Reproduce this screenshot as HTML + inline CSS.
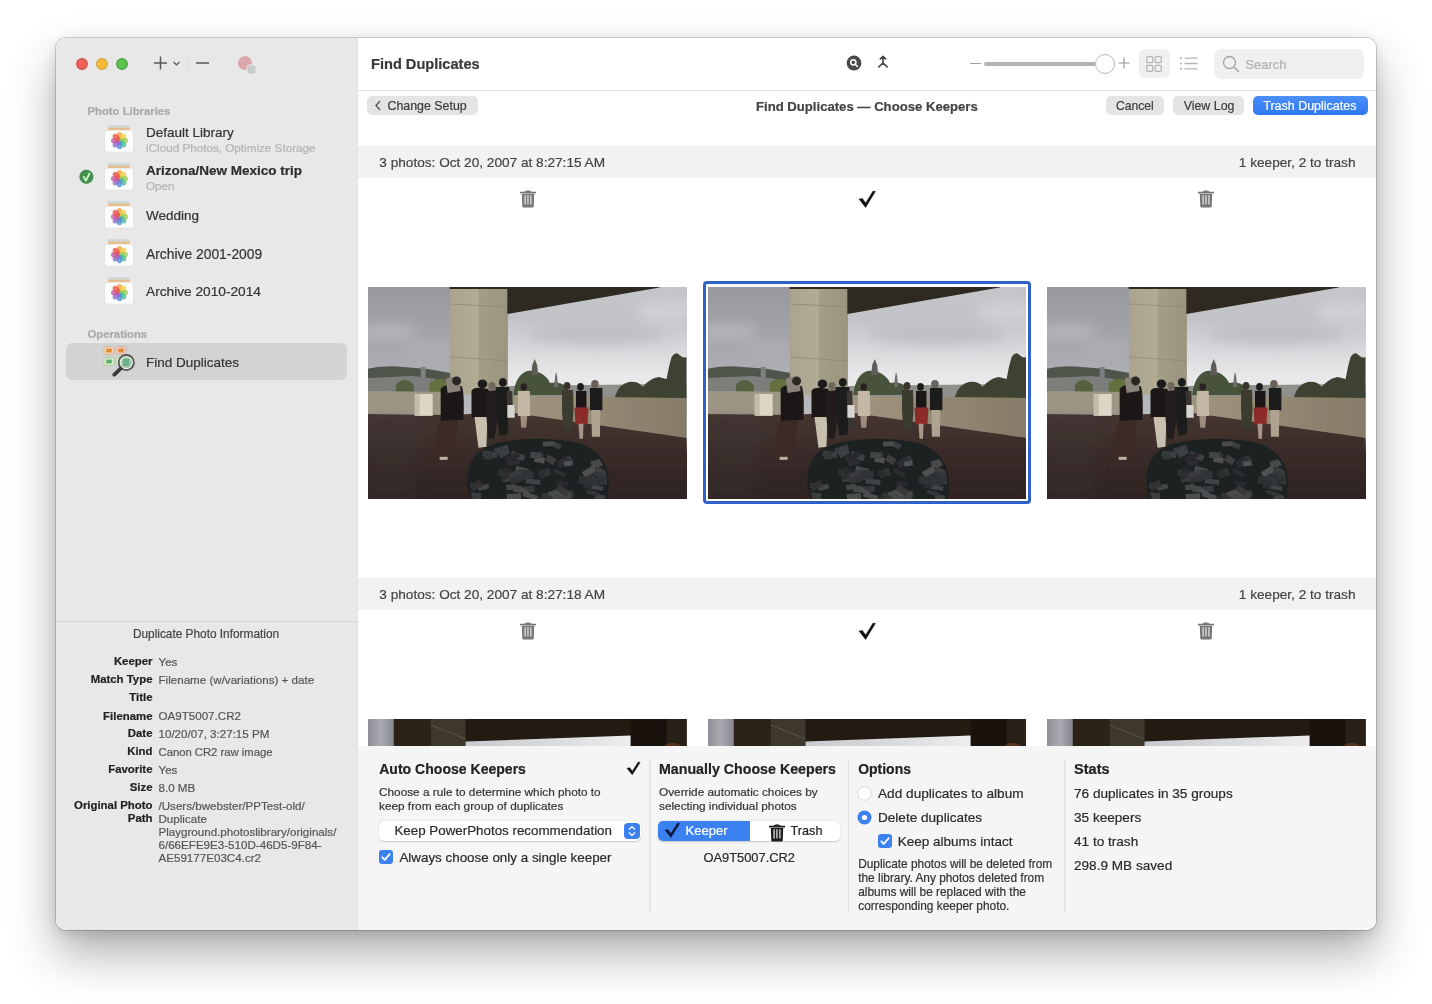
<!DOCTYPE html>
<html><head><meta charset="utf-8"><style>
html,body{margin:0;padding:0;width:1432px;height:1004px;overflow:hidden;background:#fff;font-family:"Liberation Sans",sans-serif;}
.t{position:absolute;white-space:nowrap;-webkit-text-stroke:0.2px currentColor;}
.r{position:absolute;}
#win{position:absolute;left:56px;top:38px;width:1320px;height:892px;border-radius:10px;overflow:hidden;background:#fff;}
#shadow{position:absolute;left:56px;top:38px;width:1320px;height:892px;border-radius:10px;box-shadow:0 0 0 1px rgba(0,0,0,0.16), 0 24px 48px rgba(0,0,0,0.32), 0 4px 14px rgba(0,0,0,0.12);}
#pg{position:absolute;left:-56px;top:-38px;width:1432px;height:1004px;will-change:transform;}
</style></head><body>
<div id="shadow"></div>
<div id="win"><div id="pg">
<div class="r" style="left:56px;top:38px;width:302px;height:892px;background:#e8e8e8;"></div><div class="r" style="left:358px;top:38px;width:1018px;height:892px;background:#ffffff;"></div><div class="r" style="left:356.5px;top:38px;width:1.5px;height:892px;background:#e3e3e3;"></div><div class="r" style="left:358px;top:90px;width:1018px;height:1px;background:#e2e2e2;"></div><svg class="r" style="left:75px;top:57px;" width="14" height="14" viewBox="0 0 14 14" preserveAspectRatio="none"><circle cx="7" cy="7" r="5.4" fill="#ee6257" stroke="#c4544c" stroke-width="1.1"/></svg><svg class="r" style="left:95px;top:57px;" width="14" height="14" viewBox="0 0 14 14" preserveAspectRatio="none"><circle cx="7" cy="7" r="5.4" fill="#f6bd3c" stroke="#d4a23e" stroke-width="1.1"/></svg><svg class="r" style="left:115px;top:57px;" width="14" height="14" viewBox="0 0 14 14" preserveAspectRatio="none"><circle cx="7" cy="7" r="5.4" fill="#5dc450" stroke="#4b9a45" stroke-width="1.1"/></svg><svg class="r" style="left:150px;top:53px;" width="34" height="20" viewBox="0 0 34 20" preserveAspectRatio="none"><path d="M10.5 3.5v13M4 10h13" stroke="#555" stroke-width="1.5" fill="none"/><path d="M23.5 9l3 3 3-3" stroke="#555" stroke-width="1.2" fill="none"/></svg><div class="r" style="left:187px;top:54px;width:1px;height:18px;background:#dcdcdc;"></div><svg class="r" style="left:194px;top:55px;" width="18" height="16" viewBox="0 0 18 16" preserveAspectRatio="none"><path d="M2 8h13" stroke="#555" stroke-width="1.5"/></svg><svg class="r" style="left:236px;top:54px;" width="22" height="22" viewBox="0 0 22 22" preserveAspectRatio="none"><circle cx="9" cy="9" r="7" fill="#d9a0a4" opacity="0.9"/><rect x="11" y="11" width="9" height="9" rx="2.5" fill="#c9cbce" stroke="#e8e8e8" stroke-width="1"/></svg><div class="t" style="left:87.50px;top:105.30px;font-size:11.3px;line-height:13.56px;color:#a9a9a9;font-weight:bold;">Photo Libraries</div><svg class="r" style="left:104px;top:125px;" width="30" height="28" viewBox="0 0 30 28" preserveAspectRatio="none">
    <rect x="3.5" y="0.3" width="22" height="2.2" rx="0.8" fill="#c9d6dc"/>
    <rect x="4" y="2.6" width="22" height="2.4" rx="0.8" fill="#e8bb86"/>
    <rect x="0.5" y="5.2" width="29" height="22" rx="2.5" fill="#fcfcfc" stroke="#d9d9d9" stroke-width="0.6"/>
    <g transform="translate(15.5,15.7)"><ellipse cx="0" cy="-4.4" rx="2.9" ry="4.2" fill="#f0a43a" opacity="0.82" transform="rotate(0)"/><ellipse cx="0" cy="-4.4" rx="2.9" ry="4.2" fill="#f3cf4a" opacity="0.82" transform="rotate(45)"/><ellipse cx="0" cy="-4.4" rx="2.9" ry="4.2" fill="#9ccf52" opacity="0.82" transform="rotate(90)"/><ellipse cx="0" cy="-4.4" rx="2.9" ry="4.2" fill="#4fbf9a" opacity="0.82" transform="rotate(135)"/><ellipse cx="0" cy="-4.4" rx="2.9" ry="4.2" fill="#4d93dc" opacity="0.82" transform="rotate(180)"/><ellipse cx="0" cy="-4.4" rx="2.9" ry="4.2" fill="#8a6fd0" opacity="0.82" transform="rotate(225)"/><ellipse cx="0" cy="-4.4" rx="2.9" ry="4.2" fill="#c65aa8" opacity="0.82" transform="rotate(270)"/><ellipse cx="0" cy="-4.4" rx="2.9" ry="4.2" fill="#e9574e" opacity="0.82" transform="rotate(315)"/></g></svg><div class="t" style="left:146.00px;top:125.22px;font-size:13.5px;line-height:16.20px;color:#333;">Default Library</div><div class="t" style="left:146.00px;top:141.43px;font-size:11.7px;line-height:14.04px;color:#b2b2b2;">iCloud Photos, Optimize Storage</div><svg class="r" style="left:78.5px;top:168.5px;" width="15" height="15" viewBox="0 0 15 15" preserveAspectRatio="none"><circle cx="7.4" cy="7.7" r="6.7" fill="#43924a" stroke="#356f3a" stroke-width="0.6"/><path d="M4.8 7.9L6.8 11.6L10.5 4.6" stroke="#cdf5c6" stroke-width="1.9" fill="none" stroke-linecap="round" stroke-linejoin="round"/></svg><svg class="r" style="left:104px;top:163px;" width="30" height="28" viewBox="0 0 30 28" preserveAspectRatio="none">
    <rect x="3.5" y="0.3" width="22" height="2.2" rx="0.8" fill="#c9d6dc"/>
    <rect x="4" y="2.6" width="22" height="2.4" rx="0.8" fill="#e8bb86"/>
    <rect x="0.5" y="5.2" width="29" height="22" rx="2.5" fill="#fcfcfc" stroke="#d9d9d9" stroke-width="0.6"/>
    <g transform="translate(15.5,15.7)"><ellipse cx="0" cy="-4.4" rx="2.9" ry="4.2" fill="#f0a43a" opacity="0.82" transform="rotate(0)"/><ellipse cx="0" cy="-4.4" rx="2.9" ry="4.2" fill="#f3cf4a" opacity="0.82" transform="rotate(45)"/><ellipse cx="0" cy="-4.4" rx="2.9" ry="4.2" fill="#9ccf52" opacity="0.82" transform="rotate(90)"/><ellipse cx="0" cy="-4.4" rx="2.9" ry="4.2" fill="#4fbf9a" opacity="0.82" transform="rotate(135)"/><ellipse cx="0" cy="-4.4" rx="2.9" ry="4.2" fill="#4d93dc" opacity="0.82" transform="rotate(180)"/><ellipse cx="0" cy="-4.4" rx="2.9" ry="4.2" fill="#8a6fd0" opacity="0.82" transform="rotate(225)"/><ellipse cx="0" cy="-4.4" rx="2.9" ry="4.2" fill="#c65aa8" opacity="0.82" transform="rotate(270)"/><ellipse cx="0" cy="-4.4" rx="2.9" ry="4.2" fill="#e9574e" opacity="0.82" transform="rotate(315)"/></g></svg><div class="t" style="left:146.00px;top:163.22px;font-size:13.5px;line-height:16.20px;color:#2e2e2e;font-weight:bold;">Arizona/New Mexico trip</div><div class="t" style="left:146.00px;top:179.43px;font-size:11.7px;line-height:14.04px;color:#b2b2b2;">Open</div><svg class="r" style="left:104px;top:201px;" width="30" height="28" viewBox="0 0 30 28" preserveAspectRatio="none">
    <rect x="3.5" y="0.3" width="22" height="2.2" rx="0.8" fill="#c9d6dc"/>
    <rect x="4" y="2.6" width="22" height="2.4" rx="0.8" fill="#e8bb86"/>
    <rect x="0.5" y="5.2" width="29" height="22" rx="2.5" fill="#fcfcfc" stroke="#d9d9d9" stroke-width="0.6"/>
    <g transform="translate(15.5,15.7)"><ellipse cx="0" cy="-4.4" rx="2.9" ry="4.2" fill="#f0a43a" opacity="0.82" transform="rotate(0)"/><ellipse cx="0" cy="-4.4" rx="2.9" ry="4.2" fill="#f3cf4a" opacity="0.82" transform="rotate(45)"/><ellipse cx="0" cy="-4.4" rx="2.9" ry="4.2" fill="#9ccf52" opacity="0.82" transform="rotate(90)"/><ellipse cx="0" cy="-4.4" rx="2.9" ry="4.2" fill="#4fbf9a" opacity="0.82" transform="rotate(135)"/><ellipse cx="0" cy="-4.4" rx="2.9" ry="4.2" fill="#4d93dc" opacity="0.82" transform="rotate(180)"/><ellipse cx="0" cy="-4.4" rx="2.9" ry="4.2" fill="#8a6fd0" opacity="0.82" transform="rotate(225)"/><ellipse cx="0" cy="-4.4" rx="2.9" ry="4.2" fill="#c65aa8" opacity="0.82" transform="rotate(270)"/><ellipse cx="0" cy="-4.4" rx="2.9" ry="4.2" fill="#e9574e" opacity="0.82" transform="rotate(315)"/></g></svg><div class="t" style="left:146.00px;top:208.22px;font-size:13.5px;line-height:16.20px;color:#333;">Wedding</div><svg class="r" style="left:104px;top:239px;" width="30" height="28" viewBox="0 0 30 28" preserveAspectRatio="none">
    <rect x="3.5" y="0.3" width="22" height="2.2" rx="0.8" fill="#c9d6dc"/>
    <rect x="4" y="2.6" width="22" height="2.4" rx="0.8" fill="#e8bb86"/>
    <rect x="0.5" y="5.2" width="29" height="22" rx="2.5" fill="#fcfcfc" stroke="#d9d9d9" stroke-width="0.6"/>
    <g transform="translate(15.5,15.7)"><ellipse cx="0" cy="-4.4" rx="2.9" ry="4.2" fill="#f0a43a" opacity="0.82" transform="rotate(0)"/><ellipse cx="0" cy="-4.4" rx="2.9" ry="4.2" fill="#f3cf4a" opacity="0.82" transform="rotate(45)"/><ellipse cx="0" cy="-4.4" rx="2.9" ry="4.2" fill="#9ccf52" opacity="0.82" transform="rotate(90)"/><ellipse cx="0" cy="-4.4" rx="2.9" ry="4.2" fill="#4fbf9a" opacity="0.82" transform="rotate(135)"/><ellipse cx="0" cy="-4.4" rx="2.9" ry="4.2" fill="#4d93dc" opacity="0.82" transform="rotate(180)"/><ellipse cx="0" cy="-4.4" rx="2.9" ry="4.2" fill="#8a6fd0" opacity="0.82" transform="rotate(225)"/><ellipse cx="0" cy="-4.4" rx="2.9" ry="4.2" fill="#c65aa8" opacity="0.82" transform="rotate(270)"/><ellipse cx="0" cy="-4.4" rx="2.9" ry="4.2" fill="#e9574e" opacity="0.82" transform="rotate(315)"/></g></svg><div class="t" style="left:146.00px;top:245.89px;font-size:13.85px;line-height:16.62px;color:#333;">Archive 2001-2009</div><svg class="r" style="left:104px;top:277px;" width="30" height="28" viewBox="0 0 30 28" preserveAspectRatio="none">
    <rect x="3.5" y="0.3" width="22" height="2.2" rx="0.8" fill="#c9d6dc"/>
    <rect x="4" y="2.6" width="22" height="2.4" rx="0.8" fill="#e8bb86"/>
    <rect x="0.5" y="5.2" width="29" height="22" rx="2.5" fill="#fcfcfc" stroke="#d9d9d9" stroke-width="0.6"/>
    <g transform="translate(15.5,15.7)"><ellipse cx="0" cy="-4.4" rx="2.9" ry="4.2" fill="#f0a43a" opacity="0.82" transform="rotate(0)"/><ellipse cx="0" cy="-4.4" rx="2.9" ry="4.2" fill="#f3cf4a" opacity="0.82" transform="rotate(45)"/><ellipse cx="0" cy="-4.4" rx="2.9" ry="4.2" fill="#9ccf52" opacity="0.82" transform="rotate(90)"/><ellipse cx="0" cy="-4.4" rx="2.9" ry="4.2" fill="#4fbf9a" opacity="0.82" transform="rotate(135)"/><ellipse cx="0" cy="-4.4" rx="2.9" ry="4.2" fill="#4d93dc" opacity="0.82" transform="rotate(180)"/><ellipse cx="0" cy="-4.4" rx="2.9" ry="4.2" fill="#8a6fd0" opacity="0.82" transform="rotate(225)"/><ellipse cx="0" cy="-4.4" rx="2.9" ry="4.2" fill="#c65aa8" opacity="0.82" transform="rotate(270)"/><ellipse cx="0" cy="-4.4" rx="2.9" ry="4.2" fill="#e9574e" opacity="0.82" transform="rotate(315)"/></g></svg><div class="t" style="left:146.00px;top:284.03px;font-size:13.7px;line-height:16.44px;color:#333;">Archive 2010-2014</div><div class="t" style="left:87.50px;top:328.30px;font-size:11.3px;line-height:13.56px;color:#a9a9a9;font-weight:bold;">Operations</div><div class="r" style="left:66px;top:343px;width:281px;height:37px;background:#d3d3d3;border-radius:6px;"></div><svg class="r" style="left:102px;top:345px;" width="36" height="34" viewBox="0 0 36 34" preserveAspectRatio="none">
  <rect x="2" y="1.5" width="10" height="8" rx="1.5" fill="#f7d2b0" stroke="#b9aca0" stroke-width="0.7"/>
  <rect x="4.3" y="3.6" width="5.4" height="3.8" fill="#df8f2e"/>
  <rect x="14" y="1.5" width="10" height="8" rx="1.5" fill="#f7c8b8" stroke="#b9aca0" stroke-width="0.7"/>
  <rect x="16.3" y="3.6" width="5.4" height="3.8" fill="#de8a30"/>
  <rect x="2" y="12.5" width="10" height="8" rx="1.5" fill="#d4f2c4" stroke="#a9b8a4" stroke-width="0.7"/>
  <rect x="4.3" y="14.6" width="5.4" height="3.8" fill="#5aa86a"/>
  <rect x="14" y="12.5" width="10" height="8" rx="1.5" fill="#d4f2c4" stroke="#a9b8a4" stroke-width="0.7"/>
  <circle cx="24.3" cy="17.6" r="6.6" fill="#8cc79a" fill-opacity="0.75"/>
  <rect x="21" y="14" width="6" height="7" fill="#4f9a7a" opacity="0.6"/>
  <circle cx="24.3" cy="17.6" r="6.2" fill="none" stroke="#f4f4f4" stroke-width="1.2"/>
  <circle cx="24.3" cy="17.6" r="7.6" fill="none" stroke="#555" stroke-width="1.8"/>
  <path d="M18.6 23.6L12.3 29.6" stroke="#3a3a3a" stroke-width="3.8" stroke-linecap="round"/>
</svg><div class="t" style="left:146.00px;top:354.72px;font-size:13.5px;line-height:16.20px;color:#333;">Find Duplicates</div><div class="r" style="left:56px;top:621px;width:302px;height:1px;background:#d6d6d6;"></div><div class="t" style="left:-94.00px;width:600px;text-align:center;top:627.08px;font-size:11.85px;line-height:14.22px;color:#444;">Duplicate Photo Information</div><div class="t" style="left:-247.50px;width:400px;text-align:right;top:655.41px;font-size:11.4px;line-height:13.68px;color:#1f1f1f;font-weight:bold;">Keeper</div><div class="t" style="left:158.50px;top:655.22px;font-size:11.6px;line-height:13.92px;color:#555;">Yes</div><div class="t" style="left:-247.50px;width:400px;text-align:right;top:673.01px;font-size:11.4px;line-height:13.68px;color:#1f1f1f;font-weight:bold;">Match Type</div><div class="t" style="left:158.50px;top:672.82px;font-size:11.6px;line-height:13.92px;color:#555;">Filename (w/variations) + date</div><div class="t" style="left:-247.50px;width:400px;text-align:right;top:691.21px;font-size:11.4px;line-height:13.68px;color:#1f1f1f;font-weight:bold;">Title</div><div class="t" style="left:-247.50px;width:400px;text-align:right;top:709.51px;font-size:11.4px;line-height:13.68px;color:#1f1f1f;font-weight:bold;">Filename</div><div class="t" style="left:158.50px;top:709.32px;font-size:11.6px;line-height:13.92px;color:#555;">OA9T5007.CR2</div><div class="t" style="left:-247.50px;width:400px;text-align:right;top:727.11px;font-size:11.4px;line-height:13.68px;color:#1f1f1f;font-weight:bold;">Date</div><div class="t" style="left:158.50px;top:726.92px;font-size:11.6px;line-height:13.92px;color:#555;">10/20/07, 3:27:15 PM</div><div class="t" style="left:-247.50px;width:400px;text-align:right;top:745.41px;font-size:11.4px;line-height:13.68px;color:#1f1f1f;font-weight:bold;">Kind</div><div class="t" style="left:158.50px;top:745.53px;font-size:11.27px;line-height:13.52px;color:#555;">Canon CR2 raw image</div><div class="t" style="left:-247.50px;width:400px;text-align:right;top:763.01px;font-size:11.4px;line-height:13.68px;color:#1f1f1f;font-weight:bold;">Favorite</div><div class="t" style="left:158.50px;top:762.82px;font-size:11.6px;line-height:13.92px;color:#555;">Yes</div><div class="t" style="left:-247.50px;width:400px;text-align:right;top:780.81px;font-size:11.4px;line-height:13.68px;color:#1f1f1f;font-weight:bold;">Size</div><div class="t" style="left:158.50px;top:780.62px;font-size:11.6px;line-height:13.92px;color:#555;">8.0 MB</div><div class="t" style="left:-247.50px;width:400px;text-align:right;top:799.11px;font-size:11.4px;line-height:13.68px;color:#1f1f1f;font-weight:bold;">Original Photo</div><div class="t" style="left:-247.50px;width:400px;text-align:right;top:811.61px;font-size:11.4px;line-height:13.68px;color:#1f1f1f;font-weight:bold;">Path</div><div class="t" style="left:158.50px;top:798.92px;font-size:11.6px;line-height:13.92px;color:#555;">/Users/bwebster/PPTest-old/</div><div class="t" style="left:158.50px;top:811.82px;font-size:11.6px;line-height:13.92px;color:#555;">Duplicate</div><div class="t" style="left:158.50px;top:824.72px;font-size:11.6px;line-height:13.92px;color:#555;">Playground.photoslibrary/originals/</div><div class="t" style="left:158.50px;top:837.62px;font-size:11.6px;line-height:13.92px;color:#555;">6/66EFE9E3-510D-46D5-9F84-</div><div class="t" style="left:158.50px;top:850.52px;font-size:11.6px;line-height:13.92px;color:#555;">AE59177E03C4.cr2</div><div class="t" style="left:371.00px;top:55.98px;font-size:14.6px;line-height:17.52px;color:#3a3a3a;font-weight:bold;">Find Duplicates</div><svg class="r" style="left:846px;top:55px;" width="16" height="16" viewBox="0 0 16 16" preserveAspectRatio="none"><circle cx="8" cy="8" r="7.4" fill="#4a4a4a"/><circle cx="7.3" cy="7.3" r="2.6" fill="none" stroke="#fff" stroke-width="1.5"/><path d="M9.2 9.2l2.3 2.3" stroke="#fff" stroke-width="1.6" stroke-linecap="round"/></svg><svg class="r" style="left:876px;top:54px;" width="14" height="15" viewBox="0 0 14 15" preserveAspectRatio="none"><path d="M7 2.5v6.5M3.8 5.5L7 2.3l3.2 3.2M2.3 13.3L7 9l4.7 4.3" stroke="#444" stroke-width="1.6" fill="none" stroke-linejoin="round"/></svg><div class="r" style="left:970px;top:63px;width:11px;height:1.3px;background:#a3a3a3;"></div><div class="r" style="left:984px;top:62px;width:112px;height:4px;background:#b3b3b3;border-radius:2px;"></div><svg class="r" style="left:1094px;top:53px;" width="22" height="22" viewBox="0 0 22 22" preserveAspectRatio="none"><circle cx="11" cy="11" r="9.5" fill="#fff" stroke="#b8b8b8" stroke-width="1"/></svg><svg class="r" style="left:1117px;top:56px;" width="14" height="14" viewBox="0 0 14 14" preserveAspectRatio="none"><path d="M7 1.5v11M1.5 7h11" stroke="#959595" stroke-width="1.1"/></svg><div class="r" style="left:1139px;top:49px;width:31px;height:29px;background:#f0f0f0;border-radius:6px;"></div><svg class="r" style="left:1146px;top:56px;" width="16" height="16" viewBox="0 0 16 16" preserveAspectRatio="none"><rect x="0.7" y="0.7" width="6" height="6" rx="1" fill="none" stroke="#b5b5b5" stroke-width="1.3"/><rect x="9.3" y="0.7" width="6" height="6" rx="1" fill="none" stroke="#b5b5b5" stroke-width="1.3"/><rect x="0.7" y="9.3" width="6" height="6" rx="1" fill="none" stroke="#b5b5b5" stroke-width="1.3"/><rect x="9.3" y="9.3" width="6" height="6" rx="1" fill="none" stroke="#b5b5b5" stroke-width="1.3"/></svg><svg class="r" style="left:1179px;top:56px;" width="20" height="15" viewBox="0 0 20 15" preserveAspectRatio="none"><circle cx="2" cy="2.2" r="1.1" fill="#b5b5b5"/><circle cx="2" cy="7.5" r="1.1" fill="#b5b5b5"/><circle cx="2" cy="12.8" r="1.1" fill="#b5b5b5"/><path d="M5.5 2.2h13M5.5 7.5h13M5.5 12.8h13" stroke="#b5b5b5" stroke-width="1.3"/></svg><div class="r" style="left:1214px;top:49px;width:150px;height:30px;background:#f0f0f0;border-radius:7px;"></div><svg class="r" style="left:1222px;top:55px;" width="18" height="18" viewBox="0 0 18 18" preserveAspectRatio="none"><circle cx="7.5" cy="7.5" r="6" fill="none" stroke="#a8a8a8" stroke-width="1.4"/><path d="M12 12l4.5 4.5" stroke="#a8a8a8" stroke-width="1.6" stroke-linecap="round"/></svg><div class="t" style="left:1245.50px;top:57.29px;font-size:12.9px;line-height:15.48px;color:#b0b0b0;">Search</div><div class="r" style="left:367px;top:96px;width:111px;height:19px;background:#e4e4e4;border-radius:5px;"></div><svg class="r" style="left:373px;top:99px;" width="10" height="13" viewBox="0 0 10 13" preserveAspectRatio="none"><path d="M7 2L3 6.5 7 11" stroke="#555" stroke-width="1.4" fill="none"/></svg><div class="t" style="left:387.50px;top:99.06px;font-size:12.4px;line-height:14.88px;color:#3c3c3c;">Change Setup</div><div class="t" style="left:756.00px;top:99.46px;font-size:13.14px;line-height:15.77px;color:#444;font-weight:bold;">Find Duplicates — Choose Keepers</div><div class="r" style="left:1106px;top:96px;width:58px;height:19px;background:#e4e4e4;border-radius:5px;"></div><div class="t" style="left:1116.00px;top:99.31px;font-size:12.14px;line-height:14.57px;color:#3c3c3c;">Cancel</div><div class="r" style="left:1173px;top:96px;width:71px;height:19px;background:#e4e4e4;border-radius:5px;"></div><div class="t" style="left:1183.70px;top:99.06px;font-size:12.4px;line-height:14.88px;color:#3c3c3c;">View Log</div><div class="r" style="left:1253px;top:96px;width:115px;height:19px;background:linear-gradient(#4b8ff7,#2e78f0);border-radius:5px;"></div><div class="t" style="left:1263.30px;top:98.99px;font-size:12.48px;line-height:14.98px;color:#fff;">Trash Duplicates</div><div class="r" style="left:358px;top:145.8px;width:1018px;height:32.5px;background:#f2f2f2;"></div><div class="t" style="left:379.30px;top:155.49px;font-size:13.64px;line-height:16.37px;color:#444;">3 photos: Oct 20, 2007 at 8:27:15 AM</div><div class="t" style="left:955.50px;width:400px;text-align:right;top:155.49px;font-size:13.64px;line-height:16.37px;color:#444;">1 keeper, 2 to trash</div><svg class="r" style="left:520px;top:189px;" width="16" height="19" viewBox="0 0 16 19" preserveAspectRatio="none"><path d="M4.6 3.4Q8 0.6 11.4 3.4" stroke="#767676" stroke-width="1.3" fill="none"/><path d="M0.4 3.6h15.2" stroke="#767676" stroke-width="1.7" stroke-linecap="round"/><path d="M1.8 5h12.4l-0.5 12.3q-0.1 1.2-1.2 1.2h-9q-1.1 0-1.2-1.2z" fill="#767676"/><path d="M5.1 6.2v9.2M7.95 6.2v9.2M10.9 6.2v9.2" stroke="#e2e2e2" stroke-width="1.3"/></svg><svg class="r" style="left:856.9px;top:188.5px;" width="20.4" height="20.5" viewBox="0 0 20.4 20.5" preserveAspectRatio="none"><polygon points="2.00,10.08 5.44,9.59 8.72,14.04 16.10,2.00 18.40,2.58 8.56,18.50" fill="#111" stroke="#111" stroke-width="0.5" stroke-linejoin="round"/></svg><svg class="r" style="left:1198px;top:189px;" width="16" height="19" viewBox="0 0 16 19" preserveAspectRatio="none"><path d="M4.6 3.4Q8 0.6 11.4 3.4" stroke="#767676" stroke-width="1.3" fill="none"/><path d="M0.4 3.6h15.2" stroke="#767676" stroke-width="1.7" stroke-linecap="round"/><path d="M1.8 5h12.4l-0.5 12.3q-0.1 1.2-1.2 1.2h-9q-1.1 0-1.2-1.2z" fill="#767676"/><path d="M5.1 6.2v9.2M7.95 6.2v9.2M10.9 6.2v9.2" stroke="#e2e2e2" stroke-width="1.3"/></svg><div class="r" style="left:358px;top:577.8px;width:1018px;height:32.5px;background:#f2f2f2;"></div><div class="t" style="left:379.30px;top:587.49px;font-size:13.64px;line-height:16.37px;color:#444;">3 photos: Oct 20, 2007 at 8:27:18 AM</div><div class="t" style="left:955.50px;width:400px;text-align:right;top:587.49px;font-size:13.64px;line-height:16.37px;color:#444;">1 keeper, 2 to trash</div><svg class="r" style="left:520px;top:621px;" width="16" height="19" viewBox="0 0 16 19" preserveAspectRatio="none"><path d="M4.6 3.4Q8 0.6 11.4 3.4" stroke="#767676" stroke-width="1.3" fill="none"/><path d="M0.4 3.6h15.2" stroke="#767676" stroke-width="1.7" stroke-linecap="round"/><path d="M1.8 5h12.4l-0.5 12.3q-0.1 1.2-1.2 1.2h-9q-1.1 0-1.2-1.2z" fill="#767676"/><path d="M5.1 6.2v9.2M7.95 6.2v9.2M10.9 6.2v9.2" stroke="#e2e2e2" stroke-width="1.3"/></svg><svg class="r" style="left:856.9px;top:620.5px;" width="20.4" height="20.5" viewBox="0 0 20.4 20.5" preserveAspectRatio="none"><polygon points="2.00,10.08 5.44,9.59 8.72,14.04 16.10,2.00 18.40,2.58 8.56,18.50" fill="#111" stroke="#111" stroke-width="0.5" stroke-linejoin="round"/></svg><svg class="r" style="left:1198px;top:621px;" width="16" height="19" viewBox="0 0 16 19" preserveAspectRatio="none"><path d="M4.6 3.4Q8 0.6 11.4 3.4" stroke="#767676" stroke-width="1.3" fill="none"/><path d="M0.4 3.6h15.2" stroke="#767676" stroke-width="1.7" stroke-linecap="round"/><path d="M1.8 5h12.4l-0.5 12.3q-0.1 1.2-1.2 1.2h-9q-1.1 0-1.2-1.2z" fill="#767676"/><path d="M5.1 6.2v9.2M7.95 6.2v9.2M10.9 6.2v9.2" stroke="#e2e2e2" stroke-width="1.3"/></svg><svg class="r" style="left:368.3px;top:286.8px;overflow:hidden;" width="318.5" height="211.8" viewBox="0 0 320 212" preserveAspectRatio="none"><defs>
<linearGradient id="skyL" x1="0" y1="0" x2="0" y2="1"><stop offset="0" stop-color="#97989e"/><stop offset="0.3" stop-color="#a7a8ad"/><stop offset="0.55" stop-color="#b6b7bb"/><stop offset="0.8" stop-color="#c3c3c6"/><stop offset="1" stop-color="#cbcbcd"/></linearGradient>
<linearGradient id="skyR" x1="0" y1="0" x2="0" y2="1"><stop offset="0" stop-color="#c4c5c9"/><stop offset="0.3" stop-color="#c2c3c7"/><stop offset="0.55" stop-color="#d6d7da"/><stop offset="0.8" stop-color="#e8e8ea"/><stop offset="1" stop-color="#ececed"/></linearGradient>
<linearGradient id="floor" x1="0" y1="0" x2="0" y2="1"><stop offset="0" stop-color="#463630"/><stop offset="0.5" stop-color="#392b28"/><stop offset="1" stop-color="#2e2322"/></linearGradient>
<linearGradient id="pil" x1="0" y1="0" x2="1" y2="0"><stop offset="0" stop-color="#aaa38d"/><stop offset="0.48" stop-color="#b3ac95"/><stop offset="0.52" stop-color="#aaa38c"/><stop offset="1" stop-color="#9f9882"/></linearGradient>
<linearGradient id="wallR" x1="0" y1="0" x2="1" y2="0"><stop offset="0" stop-color="#a1977f"/><stop offset="1" stop-color="#857b68"/></linearGradient>
<filter id="bl" x="0" y="0" width="100%" height="100%"><feGaussianBlur stdDeviation="0.6"/></filter>
<filter id="bl4" x="-50%" y="-50%" width="200%" height="200%"><feGaussianBlur stdDeviation="6"/></filter>
</defs>
<g filter="url(#bl)">
<rect x="-2" y="-2" width="324" height="216" fill="url(#skyL)"/>
<rect x="140" y="-2" width="182" height="114" fill="url(#skyR)"/>
<!-- clouds -->
<ellipse cx="20" cy="45" rx="30" ry="9" fill="#c0c1c5" opacity="0.55" filter="url(#bl4)"/>
<ellipse cx="60" cy="62" rx="25" ry="7" fill="#b8b9bd" opacity="0.5" filter="url(#bl4)"/>
<ellipse cx="230" cy="48" rx="70" ry="10" fill="#b0b1b6" opacity="0.5" filter="url(#bl4)"/>
<ellipse cx="300" cy="25" rx="30" ry="12" fill="#d9d9dc" opacity="0.6" filter="url(#bl4)"/>
<!-- left treeline/buildings -->
<path d="M-2 82 Q15 78 35 80 L60 82 L83 86 L83 108 L-2 108z" fill="#50544c"/>
<path d="M0 91 L45 89 L68 92 L68 106 L0 106z" fill="#7c7e7b"/>
<path d="M53 80 L58 80 L58 91 L53 91z" fill="#7e7f80"/>
<path d="M28 98 Q36 88 46 98 L46 106 L28 106z" fill="#55613f"/>
<path d="M62 96 Q72 88 83 96 L83 106 L62 106z" fill="#65703f"/>
<!-- right treeline -->
<path d="M140 108 L141 99 L300 97 L320 98 L320 112 L140 112z" fill="#8f908b"/>
<path d="M146 108 Q148 88 160 84 Q176 83 183 96 Q192 94 200 100 L202 108z" fill="#46523a"/>
<path d="M164 88 L165 78 L167.5 72 L170 78 L171 88z" fill="#5f5d5a"/>
<path d="M187 100 L188 89 L189 85 L190 89 L191 100z" fill="#6e6e6c"/>
<path d="M248 110 Q252 97 262 95 Q272 94 276 100 Q282 92 292 90 L300 92 Q302 80 305 70 Q309 64 313 68 Q317 72 320 70 L320 112 L248 112z" fill="#3c4331"/>
<!-- walls -->
<path d="M-2 104 L83 105 L83 128 L-2 127z" fill="#9d9685"/>
<path d="M140 109 L320 111 L320 151 L140 125z" fill="url(#wallR)"/>
<path d="M215 138 L300 148 L300 152 L215 142z" fill="#3a3128" opacity="0.6"/>
<!-- floor -->
<path d="M-2 127 L83 128 L140 125 L320 151 L322 214 L-2 214z" fill="url(#floor)"/>
<path d="M-2 130 L60 131 L45 214 L-2 214z" fill="#3e3638" opacity="0.3" filter="url(#bl4)"/>
<!-- pillar -->
<rect x="82.5" y="-2" width="58" height="110" fill="url(#pil)"/>
<path d="M82.5 17 L140 20" stroke="#8f8872" stroke-width="0.8"/>
<path d="M82.5 70 L140 74" stroke="#8f8872" stroke-width="0.8"/>
<rect x="111" y="-2" width="29.5" height="110" fill="#8d8670" opacity="0.18"/>
<!-- ceiling -->
<path d="M82 -2 L295 -2 L293 0.5 L140 27 L140 2 L82 2z" fill="#2d2a21"/>
<!-- planter -->
<rect x="47" y="107" width="18" height="22" fill="#ddd6c6"/>
<rect x="47" y="107" width="5" height="22" fill="#c4bcab"/>
<!-- sculpture -->
<path d="M100 190 Q101 162 135 155 Q175 148 215 157 Q240 168 242 192 L241 214 L104 214 Q99 202 100 190z" fill="#1f2224"/>
<clipPath id="sc"><path d="M102 190 Q103 164 135 157 Q175 150 214 159 Q238 170 240 192 L239 214 L106 214 Q101 202 102 190z"/></clipPath>
<g clip-path="url(#sc)"><rect x="131.1" y="182.8" width="10.6" height="6.4" fill="#2e3032" transform="rotate(9 136.4 186.0)"/><rect x="180.7" y="203.7" width="11.3" height="6.2" fill="#484a4c" transform="rotate(-22 186.4 206.8)"/><rect x="172.2" y="182.6" width="10.8" height="7.4" fill="#333537" transform="rotate(-19 177.6 186.3)"/><rect x="215.5" y="181.5" width="13.2" height="6.7" fill="#4f5153" transform="rotate(-31 222.1 184.8)"/><rect x="102.9" y="196.9" width="13.8" height="5.1" fill="#424446" transform="rotate(7 109.8 199.5)"/><rect x="195.7" y="203.9" width="10.8" height="7.2" fill="#323436" transform="rotate(-4 201.1 207.5)"/><rect x="115.1" y="164.5" width="14.8" height="5.7" fill="#3d3f41" transform="rotate(9 122.5 167.4)"/><rect x="155.3" y="199.4" width="12.0" height="6.1" fill="#383a3c" transform="rotate(-6 161.3 202.5)"/><rect x="219.7" y="190.2" width="14.5" height="7.4" fill="#343638" transform="rotate(34 227.0 193.9)"/><rect x="193.1" y="170.5" width="11.8" height="6.3" fill="#37393b" transform="rotate(-28 199.0 173.6)"/><rect x="185.1" y="209.1" width="9.9" height="4.5" fill="#484a4c" transform="rotate(-1 190.1 211.3)"/><rect x="110.6" y="198.3" width="10.9" height="4.6" fill="#444648" transform="rotate(-14 116.0 200.6)"/><rect x="181.1" y="154.9" width="13.0" height="5.3" fill="#3b3d3f" transform="rotate(27 187.6 157.6)"/><rect x="167.7" y="209.8" width="10.2" height="4.3" fill="#2c2e30" transform="rotate(7 172.7 211.9)"/><rect x="228.0" y="207.8" width="10.0" height="5.1" fill="#3f4143" transform="rotate(13 233.0 210.4)"/><rect x="139.5" y="206.9" width="14.3" height="5.5" fill="#4b4d4f" transform="rotate(-3 146.7 209.6)"/><rect x="150.1" y="202.2" width="12.8" height="4.4" fill="#4a4c4e" transform="rotate(33 156.5 204.4)"/><rect x="134.4" y="187.3" width="13.0" height="7.7" fill="#3a3c3e" transform="rotate(-4 140.9 191.2)"/><rect x="170.8" y="183.4" width="8.1" height="5.7" fill="#2b2d2f" transform="rotate(6 174.9 186.3)"/><rect x="150.7" y="185.3" width="8.9" height="6.5" fill="#404244" transform="rotate(-12 155.2 188.6)"/><rect x="189.9" y="171.6" width="12.9" height="7.0" fill="#2d2f31" transform="rotate(-33 196.4 175.1)"/><rect x="149.2" y="187.6" width="10.1" height="6.4" fill="#353739" transform="rotate(-23 154.2 190.8)"/><rect x="140.4" y="173.4" width="12.2" height="5.2" fill="#2b2d2f" transform="rotate(-9 146.5 176.0)"/><rect x="231.6" y="191.0" width="8.9" height="6.0" fill="#3b3d3f" transform="rotate(11 236.1 194.0)"/><rect x="130.9" y="162.3" width="11.0" height="6.8" fill="#3e4042" transform="rotate(-28 136.5 165.7)"/><rect x="228.3" y="189.9" width="9.6" height="7.2" fill="#2f3133" transform="rotate(32 233.1 193.5)"/><rect x="142.7" y="189.2" width="14.2" height="5.8" fill="#313335" transform="rotate(-19 149.8 192.1)"/><rect x="103.5" y="205.9" width="10.2" height="7.3" fill="#3b3d3f" transform="rotate(5 108.6 209.6)"/><rect x="146.0" y="199.0" width="8.6" height="6.5" fill="#444648" transform="rotate(6 150.3 202.2)"/><rect x="138.8" y="197.6" width="9.9" height="5.4" fill="#444648" transform="rotate(-6 143.7 200.3)"/><rect x="175.8" y="154.6" width="10.9" height="4.8" fill="#4a4c4e" transform="rotate(-2 181.3 157.0)"/><rect x="155.8" y="206.7" width="14.5" height="4.9" fill="#4b4d4f" transform="rotate(17 163.1 209.2)"/><rect x="227.9" y="182.3" width="14.2" height="7.4" fill="#3c3e40" transform="rotate(25 235.0 186.0)"/><rect x="116.2" y="165.3" width="8.2" height="7.2" fill="#36383a" transform="rotate(1 120.3 168.9)"/><rect x="219.9" y="204.3" width="12.0" height="4.1" fill="#343638" transform="rotate(17 225.9 206.3)"/><rect x="168.4" y="165.6" width="8.1" height="6.1" fill="#313335" transform="rotate(-31 172.4 168.6)"/><rect x="143.4" y="166.4" width="14.0" height="5.9" fill="#404244" transform="rotate(20 150.4 169.4)"/><rect x="126.9" y="159.7" width="14.2" height="4.5" fill="#3b3d3f" transform="rotate(-18 134.0 162.0)"/><rect x="222.5" y="198.9" width="13.8" height="4.0" fill="#434547" transform="rotate(9 229.4 200.9)"/><rect x="135.0" y="182.1" width="11.0" height="5.9" fill="#2a2c2e" transform="rotate(19 140.5 185.1)"/><rect x="216.4" y="197.1" width="8.3" height="4.2" fill="#2c2e30" transform="rotate(-1 220.6 199.2)"/><rect x="167.2" y="170.3" width="10.2" height="5.4" fill="#4f5153" transform="rotate(10 172.3 173.0)"/><rect x="137.9" y="167.2" width="14.9" height="5.7" fill="#2a2c2e" transform="rotate(-26 145.4 170.1)"/><rect x="197.1" y="174.3" width="8.6" height="4.7" fill="#505254" transform="rotate(-9 201.4 176.7)"/><rect x="186.2" y="183.8" width="12.5" height="4.2" fill="#2d2f31" transform="rotate(27 192.4 185.9)"/><rect x="148.2" y="180.4" width="12.9" height="5.7" fill="#47494b" transform="rotate(14 154.6 183.3)"/><rect x="133.9" y="186.2" width="13.6" height="4.9" fill="#2b2d2f" transform="rotate(-26 140.7 188.6)"/><rect x="224.2" y="172.7" width="14.3" height="7.2" fill="#47494b" transform="rotate(-17 231.4 176.3)"/><rect x="191.4" y="204.8" width="13.1" height="7.4" fill="#424446" transform="rotate(2 197.9 208.5)"/><rect x="188.8" y="194.6" width="11.9" height="4.4" fill="#2a2c2e" transform="rotate(6 194.8 196.8)"/><rect x="163.0" y="165.4" width="10.7" height="6.1" fill="#424446" transform="rotate(5 168.4 168.5)"/><rect x="211.8" y="189.5" width="13.9" height="7.8" fill="#2f3133" transform="rotate(6 218.8 193.4)"/><rect x="103.1" y="195.3" width="11.6" height="6.9" fill="#303234" transform="rotate(-28 108.9 198.7)"/><rect x="141.2" y="184.7" width="13.8" height="5.0" fill="#393b3d" transform="rotate(-22 148.1 187.1)"/><rect x="158.5" y="192.4" width="14.6" height="5.0" fill="#404244" transform="rotate(7 165.8 194.9)"/><rect x="174.4" y="207.6" width="10.6" height="4.9" fill="#343638" transform="rotate(30 179.7 210.1)"/><rect x="154.4" y="183.6" width="12.1" height="7.7" fill="#333537" transform="rotate(13 160.5 187.4)"/><rect x="186.9" y="204.0" width="9.0" height="4.4" fill="#4b4d4f" transform="rotate(17 191.4 206.2)"/><rect x="226.3" y="186.2" width="14.0" height="4.5" fill="#333537" transform="rotate(18 233.3 188.4)"/><rect x="178.8" y="169.6" width="9.6" height="6.8" fill="#3c3e40" transform="rotate(32 183.6 172.9)"/><rect x="189.2" y="200.6" width="12.2" height="6.3" fill="#37393b" transform="rotate(34 195.3 203.8)"/></g>
<!-- people -->
<!-- P1 -->
<path d="M66 172 L70 140 L74 133 L90 133 L89 150 L84 172z" fill="#3a2c26"/>
<path d="M73 104 Q72 100 80 98 L94 99 Q97 104 96 133 L73 134z" fill="#1b1919"/>
<path d="M78 92 Q84 88 92 92 L93 104 L80 106z" fill="#8a8378"/>
<ellipse cx="89" cy="94" rx="4.5" ry="4.5" fill="#2a2522"/>
<rect x="72" y="170" width="8" height="3" fill="#bdb3a5"/>
<!-- P2 -->
<ellipse cx="115" cy="97" rx="4.8" ry="4.5" fill="#1e1b1b"/>
<path d="M104 104 Q106 100 114 101 L121 102 Q123 110 122 131 L104 131z" fill="#1a1818"/>
<path d="M107 130 L120 130 L119 160 L111 161z" fill="#c8c0af"/>
<!-- P3 -->
<ellipse cx="124.5" cy="99" rx="3.6" ry="4" fill="#6f675d"/>
<path d="M119 104 L130 103 L131 128 L127 152 L121 152 L119 130z" fill="#221f1d"/>
<!-- P4 -->
<ellipse cx="135.5" cy="95.5" rx="4" ry="4.3" fill="#1f1c1b"/>
<path d="M128 100 L142 100 L143 125 L140 148 L132 149 L129 125z" fill="#1d1b1b"/>
<path d="M139 104 L145 104 L146 140 L141 140z" fill="#3a3632"/>
<path d="M140 118 L147 118 L147.5 131 L140 131z" fill="#d7d5d2"/>
<!-- bride -->
<ellipse cx="156.5" cy="100" rx="3.3" ry="3.6" fill="#2a2220"/>
<path d="M150.5 104 L162.5 104 L163 129 L150.5 129z" fill="#c3b8a5"/>
<path d="M153 129 L160 129 L159 141 L154 141z" fill="#9c8c7e"/>
<!-- P6 -->
<ellipse cx="200" cy="99" rx="3.4" ry="3.8" fill="#3a302a"/>
<path d="M195 103 L206 103 L206.5 124 L205 142 L196 142 L195 124z" fill="#3b3a2e"/>
<!-- P7 -->
<ellipse cx="213.5" cy="100" rx="3.4" ry="3.8" fill="#1d1a1a"/>
<path d="M209 104 L219.5 104 L219.5 121 L209 121z" fill="#1a1818"/>
<path d="M207.5 120.5 L221.5 120.5 L220.5 137.5 L208.5 137.5z" fill="#8b2c28"/>
<path d="M211.5 137 L216.5 137 L216 152 L212.5 152z" fill="#a9978a"/>
<!-- P8 -->
<ellipse cx="228" cy="97" rx="3.8" ry="4" fill="#6a625a"/>
<path d="M223 101 L235.5 101 L235.5 123.5 L223 123.5z" fill="#1e1b1b"/>
<path d="M224.3 123 L233.4 123 L233 150 L225 150z" fill="#ada38f"/>
</g>
</svg><svg class="r" style="left:707.8px;top:286.8px;overflow:hidden;" width="318.5" height="211.8" viewBox="0 0 320 212" preserveAspectRatio="none"><defs>
<linearGradient id="skyL" x1="0" y1="0" x2="0" y2="1"><stop offset="0" stop-color="#97989e"/><stop offset="0.3" stop-color="#a7a8ad"/><stop offset="0.55" stop-color="#b6b7bb"/><stop offset="0.8" stop-color="#c3c3c6"/><stop offset="1" stop-color="#cbcbcd"/></linearGradient>
<linearGradient id="skyR" x1="0" y1="0" x2="0" y2="1"><stop offset="0" stop-color="#c4c5c9"/><stop offset="0.3" stop-color="#c2c3c7"/><stop offset="0.55" stop-color="#d6d7da"/><stop offset="0.8" stop-color="#e8e8ea"/><stop offset="1" stop-color="#ececed"/></linearGradient>
<linearGradient id="floor" x1="0" y1="0" x2="0" y2="1"><stop offset="0" stop-color="#463630"/><stop offset="0.5" stop-color="#392b28"/><stop offset="1" stop-color="#2e2322"/></linearGradient>
<linearGradient id="pil" x1="0" y1="0" x2="1" y2="0"><stop offset="0" stop-color="#aaa38d"/><stop offset="0.48" stop-color="#b3ac95"/><stop offset="0.52" stop-color="#aaa38c"/><stop offset="1" stop-color="#9f9882"/></linearGradient>
<linearGradient id="wallR" x1="0" y1="0" x2="1" y2="0"><stop offset="0" stop-color="#a1977f"/><stop offset="1" stop-color="#857b68"/></linearGradient>
<filter id="bl" x="0" y="0" width="100%" height="100%"><feGaussianBlur stdDeviation="0.6"/></filter>
<filter id="bl4" x="-50%" y="-50%" width="200%" height="200%"><feGaussianBlur stdDeviation="6"/></filter>
</defs>
<g filter="url(#bl)">
<rect x="-2" y="-2" width="324" height="216" fill="url(#skyL)"/>
<rect x="140" y="-2" width="182" height="114" fill="url(#skyR)"/>
<!-- clouds -->
<ellipse cx="20" cy="45" rx="30" ry="9" fill="#c0c1c5" opacity="0.55" filter="url(#bl4)"/>
<ellipse cx="60" cy="62" rx="25" ry="7" fill="#b8b9bd" opacity="0.5" filter="url(#bl4)"/>
<ellipse cx="230" cy="48" rx="70" ry="10" fill="#b0b1b6" opacity="0.5" filter="url(#bl4)"/>
<ellipse cx="300" cy="25" rx="30" ry="12" fill="#d9d9dc" opacity="0.6" filter="url(#bl4)"/>
<!-- left treeline/buildings -->
<path d="M-2 82 Q15 78 35 80 L60 82 L83 86 L83 108 L-2 108z" fill="#50544c"/>
<path d="M0 91 L45 89 L68 92 L68 106 L0 106z" fill="#7c7e7b"/>
<path d="M53 80 L58 80 L58 91 L53 91z" fill="#7e7f80"/>
<path d="M28 98 Q36 88 46 98 L46 106 L28 106z" fill="#55613f"/>
<path d="M62 96 Q72 88 83 96 L83 106 L62 106z" fill="#65703f"/>
<!-- right treeline -->
<path d="M140 108 L141 99 L300 97 L320 98 L320 112 L140 112z" fill="#8f908b"/>
<path d="M146 108 Q148 88 160 84 Q176 83 183 96 Q192 94 200 100 L202 108z" fill="#46523a"/>
<path d="M164 88 L165 78 L167.5 72 L170 78 L171 88z" fill="#5f5d5a"/>
<path d="M187 100 L188 89 L189 85 L190 89 L191 100z" fill="#6e6e6c"/>
<path d="M248 110 Q252 97 262 95 Q272 94 276 100 Q282 92 292 90 L300 92 Q302 80 305 70 Q309 64 313 68 Q317 72 320 70 L320 112 L248 112z" fill="#3c4331"/>
<!-- walls -->
<path d="M-2 104 L83 105 L83 128 L-2 127z" fill="#9d9685"/>
<path d="M140 109 L320 111 L320 151 L140 125z" fill="url(#wallR)"/>
<path d="M215 138 L300 148 L300 152 L215 142z" fill="#3a3128" opacity="0.6"/>
<!-- floor -->
<path d="M-2 127 L83 128 L140 125 L320 151 L322 214 L-2 214z" fill="url(#floor)"/>
<path d="M-2 130 L60 131 L45 214 L-2 214z" fill="#3e3638" opacity="0.3" filter="url(#bl4)"/>
<!-- pillar -->
<rect x="82.5" y="-2" width="58" height="110" fill="url(#pil)"/>
<path d="M82.5 17 L140 20" stroke="#8f8872" stroke-width="0.8"/>
<path d="M82.5 70 L140 74" stroke="#8f8872" stroke-width="0.8"/>
<rect x="111" y="-2" width="29.5" height="110" fill="#8d8670" opacity="0.18"/>
<!-- ceiling -->
<path d="M82 -2 L295 -2 L293 0.5 L140 27 L140 2 L82 2z" fill="#2d2a21"/>
<!-- planter -->
<rect x="47" y="107" width="18" height="22" fill="#ddd6c6"/>
<rect x="47" y="107" width="5" height="22" fill="#c4bcab"/>
<!-- sculpture -->
<path d="M100 190 Q101 162 135 155 Q175 148 215 157 Q240 168 242 192 L241 214 L104 214 Q99 202 100 190z" fill="#1f2224"/>
<clipPath id="sc"><path d="M102 190 Q103 164 135 157 Q175 150 214 159 Q238 170 240 192 L239 214 L106 214 Q101 202 102 190z"/></clipPath>
<g clip-path="url(#sc)"><rect x="131.1" y="182.8" width="10.6" height="6.4" fill="#2e3032" transform="rotate(9 136.4 186.0)"/><rect x="180.7" y="203.7" width="11.3" height="6.2" fill="#484a4c" transform="rotate(-22 186.4 206.8)"/><rect x="172.2" y="182.6" width="10.8" height="7.4" fill="#333537" transform="rotate(-19 177.6 186.3)"/><rect x="215.5" y="181.5" width="13.2" height="6.7" fill="#4f5153" transform="rotate(-31 222.1 184.8)"/><rect x="102.9" y="196.9" width="13.8" height="5.1" fill="#424446" transform="rotate(7 109.8 199.5)"/><rect x="195.7" y="203.9" width="10.8" height="7.2" fill="#323436" transform="rotate(-4 201.1 207.5)"/><rect x="115.1" y="164.5" width="14.8" height="5.7" fill="#3d3f41" transform="rotate(9 122.5 167.4)"/><rect x="155.3" y="199.4" width="12.0" height="6.1" fill="#383a3c" transform="rotate(-6 161.3 202.5)"/><rect x="219.7" y="190.2" width="14.5" height="7.4" fill="#343638" transform="rotate(34 227.0 193.9)"/><rect x="193.1" y="170.5" width="11.8" height="6.3" fill="#37393b" transform="rotate(-28 199.0 173.6)"/><rect x="185.1" y="209.1" width="9.9" height="4.5" fill="#484a4c" transform="rotate(-1 190.1 211.3)"/><rect x="110.6" y="198.3" width="10.9" height="4.6" fill="#444648" transform="rotate(-14 116.0 200.6)"/><rect x="181.1" y="154.9" width="13.0" height="5.3" fill="#3b3d3f" transform="rotate(27 187.6 157.6)"/><rect x="167.7" y="209.8" width="10.2" height="4.3" fill="#2c2e30" transform="rotate(7 172.7 211.9)"/><rect x="228.0" y="207.8" width="10.0" height="5.1" fill="#3f4143" transform="rotate(13 233.0 210.4)"/><rect x="139.5" y="206.9" width="14.3" height="5.5" fill="#4b4d4f" transform="rotate(-3 146.7 209.6)"/><rect x="150.1" y="202.2" width="12.8" height="4.4" fill="#4a4c4e" transform="rotate(33 156.5 204.4)"/><rect x="134.4" y="187.3" width="13.0" height="7.7" fill="#3a3c3e" transform="rotate(-4 140.9 191.2)"/><rect x="170.8" y="183.4" width="8.1" height="5.7" fill="#2b2d2f" transform="rotate(6 174.9 186.3)"/><rect x="150.7" y="185.3" width="8.9" height="6.5" fill="#404244" transform="rotate(-12 155.2 188.6)"/><rect x="189.9" y="171.6" width="12.9" height="7.0" fill="#2d2f31" transform="rotate(-33 196.4 175.1)"/><rect x="149.2" y="187.6" width="10.1" height="6.4" fill="#353739" transform="rotate(-23 154.2 190.8)"/><rect x="140.4" y="173.4" width="12.2" height="5.2" fill="#2b2d2f" transform="rotate(-9 146.5 176.0)"/><rect x="231.6" y="191.0" width="8.9" height="6.0" fill="#3b3d3f" transform="rotate(11 236.1 194.0)"/><rect x="130.9" y="162.3" width="11.0" height="6.8" fill="#3e4042" transform="rotate(-28 136.5 165.7)"/><rect x="228.3" y="189.9" width="9.6" height="7.2" fill="#2f3133" transform="rotate(32 233.1 193.5)"/><rect x="142.7" y="189.2" width="14.2" height="5.8" fill="#313335" transform="rotate(-19 149.8 192.1)"/><rect x="103.5" y="205.9" width="10.2" height="7.3" fill="#3b3d3f" transform="rotate(5 108.6 209.6)"/><rect x="146.0" y="199.0" width="8.6" height="6.5" fill="#444648" transform="rotate(6 150.3 202.2)"/><rect x="138.8" y="197.6" width="9.9" height="5.4" fill="#444648" transform="rotate(-6 143.7 200.3)"/><rect x="175.8" y="154.6" width="10.9" height="4.8" fill="#4a4c4e" transform="rotate(-2 181.3 157.0)"/><rect x="155.8" y="206.7" width="14.5" height="4.9" fill="#4b4d4f" transform="rotate(17 163.1 209.2)"/><rect x="227.9" y="182.3" width="14.2" height="7.4" fill="#3c3e40" transform="rotate(25 235.0 186.0)"/><rect x="116.2" y="165.3" width="8.2" height="7.2" fill="#36383a" transform="rotate(1 120.3 168.9)"/><rect x="219.9" y="204.3" width="12.0" height="4.1" fill="#343638" transform="rotate(17 225.9 206.3)"/><rect x="168.4" y="165.6" width="8.1" height="6.1" fill="#313335" transform="rotate(-31 172.4 168.6)"/><rect x="143.4" y="166.4" width="14.0" height="5.9" fill="#404244" transform="rotate(20 150.4 169.4)"/><rect x="126.9" y="159.7" width="14.2" height="4.5" fill="#3b3d3f" transform="rotate(-18 134.0 162.0)"/><rect x="222.5" y="198.9" width="13.8" height="4.0" fill="#434547" transform="rotate(9 229.4 200.9)"/><rect x="135.0" y="182.1" width="11.0" height="5.9" fill="#2a2c2e" transform="rotate(19 140.5 185.1)"/><rect x="216.4" y="197.1" width="8.3" height="4.2" fill="#2c2e30" transform="rotate(-1 220.6 199.2)"/><rect x="167.2" y="170.3" width="10.2" height="5.4" fill="#4f5153" transform="rotate(10 172.3 173.0)"/><rect x="137.9" y="167.2" width="14.9" height="5.7" fill="#2a2c2e" transform="rotate(-26 145.4 170.1)"/><rect x="197.1" y="174.3" width="8.6" height="4.7" fill="#505254" transform="rotate(-9 201.4 176.7)"/><rect x="186.2" y="183.8" width="12.5" height="4.2" fill="#2d2f31" transform="rotate(27 192.4 185.9)"/><rect x="148.2" y="180.4" width="12.9" height="5.7" fill="#47494b" transform="rotate(14 154.6 183.3)"/><rect x="133.9" y="186.2" width="13.6" height="4.9" fill="#2b2d2f" transform="rotate(-26 140.7 188.6)"/><rect x="224.2" y="172.7" width="14.3" height="7.2" fill="#47494b" transform="rotate(-17 231.4 176.3)"/><rect x="191.4" y="204.8" width="13.1" height="7.4" fill="#424446" transform="rotate(2 197.9 208.5)"/><rect x="188.8" y="194.6" width="11.9" height="4.4" fill="#2a2c2e" transform="rotate(6 194.8 196.8)"/><rect x="163.0" y="165.4" width="10.7" height="6.1" fill="#424446" transform="rotate(5 168.4 168.5)"/><rect x="211.8" y="189.5" width="13.9" height="7.8" fill="#2f3133" transform="rotate(6 218.8 193.4)"/><rect x="103.1" y="195.3" width="11.6" height="6.9" fill="#303234" transform="rotate(-28 108.9 198.7)"/><rect x="141.2" y="184.7" width="13.8" height="5.0" fill="#393b3d" transform="rotate(-22 148.1 187.1)"/><rect x="158.5" y="192.4" width="14.6" height="5.0" fill="#404244" transform="rotate(7 165.8 194.9)"/><rect x="174.4" y="207.6" width="10.6" height="4.9" fill="#343638" transform="rotate(30 179.7 210.1)"/><rect x="154.4" y="183.6" width="12.1" height="7.7" fill="#333537" transform="rotate(13 160.5 187.4)"/><rect x="186.9" y="204.0" width="9.0" height="4.4" fill="#4b4d4f" transform="rotate(17 191.4 206.2)"/><rect x="226.3" y="186.2" width="14.0" height="4.5" fill="#333537" transform="rotate(18 233.3 188.4)"/><rect x="178.8" y="169.6" width="9.6" height="6.8" fill="#3c3e40" transform="rotate(32 183.6 172.9)"/><rect x="189.2" y="200.6" width="12.2" height="6.3" fill="#37393b" transform="rotate(34 195.3 203.8)"/></g>
<!-- people -->
<!-- P1 -->
<path d="M66 172 L70 140 L74 133 L90 133 L89 150 L84 172z" fill="#3a2c26"/>
<path d="M73 104 Q72 100 80 98 L94 99 Q97 104 96 133 L73 134z" fill="#1b1919"/>
<path d="M78 92 Q84 88 92 92 L93 104 L80 106z" fill="#8a8378"/>
<ellipse cx="89" cy="94" rx="4.5" ry="4.5" fill="#2a2522"/>
<rect x="72" y="170" width="8" height="3" fill="#bdb3a5"/>
<!-- P2 -->
<ellipse cx="115" cy="97" rx="4.8" ry="4.5" fill="#1e1b1b"/>
<path d="M104 104 Q106 100 114 101 L121 102 Q123 110 122 131 L104 131z" fill="#1a1818"/>
<path d="M107 130 L120 130 L119 160 L111 161z" fill="#c8c0af"/>
<!-- P3 -->
<ellipse cx="124.5" cy="99" rx="3.6" ry="4" fill="#6f675d"/>
<path d="M119 104 L130 103 L131 128 L127 152 L121 152 L119 130z" fill="#221f1d"/>
<!-- P4 -->
<ellipse cx="135.5" cy="95.5" rx="4" ry="4.3" fill="#1f1c1b"/>
<path d="M128 100 L142 100 L143 125 L140 148 L132 149 L129 125z" fill="#1d1b1b"/>
<path d="M139 104 L145 104 L146 140 L141 140z" fill="#3a3632"/>
<path d="M140 118 L147 118 L147.5 131 L140 131z" fill="#d7d5d2"/>
<!-- bride -->
<ellipse cx="156.5" cy="100" rx="3.3" ry="3.6" fill="#2a2220"/>
<path d="M150.5 104 L162.5 104 L163 129 L150.5 129z" fill="#c3b8a5"/>
<path d="M153 129 L160 129 L159 141 L154 141z" fill="#9c8c7e"/>
<!-- P6 -->
<ellipse cx="200" cy="99" rx="3.4" ry="3.8" fill="#3a302a"/>
<path d="M195 103 L206 103 L206.5 124 L205 142 L196 142 L195 124z" fill="#3b3a2e"/>
<!-- P7 -->
<ellipse cx="213.5" cy="100" rx="3.4" ry="3.8" fill="#1d1a1a"/>
<path d="M209 104 L219.5 104 L219.5 121 L209 121z" fill="#1a1818"/>
<path d="M207.5 120.5 L221.5 120.5 L220.5 137.5 L208.5 137.5z" fill="#8b2c28"/>
<path d="M211.5 137 L216.5 137 L216 152 L212.5 152z" fill="#a9978a"/>
<!-- P8 -->
<ellipse cx="228" cy="97" rx="3.8" ry="4" fill="#6a625a"/>
<path d="M223 101 L235.5 101 L235.5 123.5 L223 123.5z" fill="#1e1b1b"/>
<path d="M224.3 123 L233.4 123 L233 150 L225 150z" fill="#ada38f"/>
</g>
</svg><svg class="r" style="left:1047px;top:286.8px;overflow:hidden;" width="318.5" height="211.8" viewBox="0 0 320 212" preserveAspectRatio="none"><defs>
<linearGradient id="skyL" x1="0" y1="0" x2="0" y2="1"><stop offset="0" stop-color="#97989e"/><stop offset="0.3" stop-color="#a7a8ad"/><stop offset="0.55" stop-color="#b6b7bb"/><stop offset="0.8" stop-color="#c3c3c6"/><stop offset="1" stop-color="#cbcbcd"/></linearGradient>
<linearGradient id="skyR" x1="0" y1="0" x2="0" y2="1"><stop offset="0" stop-color="#c4c5c9"/><stop offset="0.3" stop-color="#c2c3c7"/><stop offset="0.55" stop-color="#d6d7da"/><stop offset="0.8" stop-color="#e8e8ea"/><stop offset="1" stop-color="#ececed"/></linearGradient>
<linearGradient id="floor" x1="0" y1="0" x2="0" y2="1"><stop offset="0" stop-color="#463630"/><stop offset="0.5" stop-color="#392b28"/><stop offset="1" stop-color="#2e2322"/></linearGradient>
<linearGradient id="pil" x1="0" y1="0" x2="1" y2="0"><stop offset="0" stop-color="#aaa38d"/><stop offset="0.48" stop-color="#b3ac95"/><stop offset="0.52" stop-color="#aaa38c"/><stop offset="1" stop-color="#9f9882"/></linearGradient>
<linearGradient id="wallR" x1="0" y1="0" x2="1" y2="0"><stop offset="0" stop-color="#a1977f"/><stop offset="1" stop-color="#857b68"/></linearGradient>
<filter id="bl" x="0" y="0" width="100%" height="100%"><feGaussianBlur stdDeviation="0.6"/></filter>
<filter id="bl4" x="-50%" y="-50%" width="200%" height="200%"><feGaussianBlur stdDeviation="6"/></filter>
</defs>
<g filter="url(#bl)">
<rect x="-2" y="-2" width="324" height="216" fill="url(#skyL)"/>
<rect x="140" y="-2" width="182" height="114" fill="url(#skyR)"/>
<!-- clouds -->
<ellipse cx="20" cy="45" rx="30" ry="9" fill="#c0c1c5" opacity="0.55" filter="url(#bl4)"/>
<ellipse cx="60" cy="62" rx="25" ry="7" fill="#b8b9bd" opacity="0.5" filter="url(#bl4)"/>
<ellipse cx="230" cy="48" rx="70" ry="10" fill="#b0b1b6" opacity="0.5" filter="url(#bl4)"/>
<ellipse cx="300" cy="25" rx="30" ry="12" fill="#d9d9dc" opacity="0.6" filter="url(#bl4)"/>
<!-- left treeline/buildings -->
<path d="M-2 82 Q15 78 35 80 L60 82 L83 86 L83 108 L-2 108z" fill="#50544c"/>
<path d="M0 91 L45 89 L68 92 L68 106 L0 106z" fill="#7c7e7b"/>
<path d="M53 80 L58 80 L58 91 L53 91z" fill="#7e7f80"/>
<path d="M28 98 Q36 88 46 98 L46 106 L28 106z" fill="#55613f"/>
<path d="M62 96 Q72 88 83 96 L83 106 L62 106z" fill="#65703f"/>
<!-- right treeline -->
<path d="M140 108 L141 99 L300 97 L320 98 L320 112 L140 112z" fill="#8f908b"/>
<path d="M146 108 Q148 88 160 84 Q176 83 183 96 Q192 94 200 100 L202 108z" fill="#46523a"/>
<path d="M164 88 L165 78 L167.5 72 L170 78 L171 88z" fill="#5f5d5a"/>
<path d="M187 100 L188 89 L189 85 L190 89 L191 100z" fill="#6e6e6c"/>
<path d="M248 110 Q252 97 262 95 Q272 94 276 100 Q282 92 292 90 L300 92 Q302 80 305 70 Q309 64 313 68 Q317 72 320 70 L320 112 L248 112z" fill="#3c4331"/>
<!-- walls -->
<path d="M-2 104 L83 105 L83 128 L-2 127z" fill="#9d9685"/>
<path d="M140 109 L320 111 L320 151 L140 125z" fill="url(#wallR)"/>
<path d="M215 138 L300 148 L300 152 L215 142z" fill="#3a3128" opacity="0.6"/>
<!-- floor -->
<path d="M-2 127 L83 128 L140 125 L320 151 L322 214 L-2 214z" fill="url(#floor)"/>
<path d="M-2 130 L60 131 L45 214 L-2 214z" fill="#3e3638" opacity="0.3" filter="url(#bl4)"/>
<!-- pillar -->
<rect x="82.5" y="-2" width="58" height="110" fill="url(#pil)"/>
<path d="M82.5 17 L140 20" stroke="#8f8872" stroke-width="0.8"/>
<path d="M82.5 70 L140 74" stroke="#8f8872" stroke-width="0.8"/>
<rect x="111" y="-2" width="29.5" height="110" fill="#8d8670" opacity="0.18"/>
<!-- ceiling -->
<path d="M82 -2 L295 -2 L293 0.5 L140 27 L140 2 L82 2z" fill="#2d2a21"/>
<!-- planter -->
<rect x="47" y="107" width="18" height="22" fill="#ddd6c6"/>
<rect x="47" y="107" width="5" height="22" fill="#c4bcab"/>
<!-- sculpture -->
<path d="M100 190 Q101 162 135 155 Q175 148 215 157 Q240 168 242 192 L241 214 L104 214 Q99 202 100 190z" fill="#1f2224"/>
<clipPath id="sc"><path d="M102 190 Q103 164 135 157 Q175 150 214 159 Q238 170 240 192 L239 214 L106 214 Q101 202 102 190z"/></clipPath>
<g clip-path="url(#sc)"><rect x="131.1" y="182.8" width="10.6" height="6.4" fill="#2e3032" transform="rotate(9 136.4 186.0)"/><rect x="180.7" y="203.7" width="11.3" height="6.2" fill="#484a4c" transform="rotate(-22 186.4 206.8)"/><rect x="172.2" y="182.6" width="10.8" height="7.4" fill="#333537" transform="rotate(-19 177.6 186.3)"/><rect x="215.5" y="181.5" width="13.2" height="6.7" fill="#4f5153" transform="rotate(-31 222.1 184.8)"/><rect x="102.9" y="196.9" width="13.8" height="5.1" fill="#424446" transform="rotate(7 109.8 199.5)"/><rect x="195.7" y="203.9" width="10.8" height="7.2" fill="#323436" transform="rotate(-4 201.1 207.5)"/><rect x="115.1" y="164.5" width="14.8" height="5.7" fill="#3d3f41" transform="rotate(9 122.5 167.4)"/><rect x="155.3" y="199.4" width="12.0" height="6.1" fill="#383a3c" transform="rotate(-6 161.3 202.5)"/><rect x="219.7" y="190.2" width="14.5" height="7.4" fill="#343638" transform="rotate(34 227.0 193.9)"/><rect x="193.1" y="170.5" width="11.8" height="6.3" fill="#37393b" transform="rotate(-28 199.0 173.6)"/><rect x="185.1" y="209.1" width="9.9" height="4.5" fill="#484a4c" transform="rotate(-1 190.1 211.3)"/><rect x="110.6" y="198.3" width="10.9" height="4.6" fill="#444648" transform="rotate(-14 116.0 200.6)"/><rect x="181.1" y="154.9" width="13.0" height="5.3" fill="#3b3d3f" transform="rotate(27 187.6 157.6)"/><rect x="167.7" y="209.8" width="10.2" height="4.3" fill="#2c2e30" transform="rotate(7 172.7 211.9)"/><rect x="228.0" y="207.8" width="10.0" height="5.1" fill="#3f4143" transform="rotate(13 233.0 210.4)"/><rect x="139.5" y="206.9" width="14.3" height="5.5" fill="#4b4d4f" transform="rotate(-3 146.7 209.6)"/><rect x="150.1" y="202.2" width="12.8" height="4.4" fill="#4a4c4e" transform="rotate(33 156.5 204.4)"/><rect x="134.4" y="187.3" width="13.0" height="7.7" fill="#3a3c3e" transform="rotate(-4 140.9 191.2)"/><rect x="170.8" y="183.4" width="8.1" height="5.7" fill="#2b2d2f" transform="rotate(6 174.9 186.3)"/><rect x="150.7" y="185.3" width="8.9" height="6.5" fill="#404244" transform="rotate(-12 155.2 188.6)"/><rect x="189.9" y="171.6" width="12.9" height="7.0" fill="#2d2f31" transform="rotate(-33 196.4 175.1)"/><rect x="149.2" y="187.6" width="10.1" height="6.4" fill="#353739" transform="rotate(-23 154.2 190.8)"/><rect x="140.4" y="173.4" width="12.2" height="5.2" fill="#2b2d2f" transform="rotate(-9 146.5 176.0)"/><rect x="231.6" y="191.0" width="8.9" height="6.0" fill="#3b3d3f" transform="rotate(11 236.1 194.0)"/><rect x="130.9" y="162.3" width="11.0" height="6.8" fill="#3e4042" transform="rotate(-28 136.5 165.7)"/><rect x="228.3" y="189.9" width="9.6" height="7.2" fill="#2f3133" transform="rotate(32 233.1 193.5)"/><rect x="142.7" y="189.2" width="14.2" height="5.8" fill="#313335" transform="rotate(-19 149.8 192.1)"/><rect x="103.5" y="205.9" width="10.2" height="7.3" fill="#3b3d3f" transform="rotate(5 108.6 209.6)"/><rect x="146.0" y="199.0" width="8.6" height="6.5" fill="#444648" transform="rotate(6 150.3 202.2)"/><rect x="138.8" y="197.6" width="9.9" height="5.4" fill="#444648" transform="rotate(-6 143.7 200.3)"/><rect x="175.8" y="154.6" width="10.9" height="4.8" fill="#4a4c4e" transform="rotate(-2 181.3 157.0)"/><rect x="155.8" y="206.7" width="14.5" height="4.9" fill="#4b4d4f" transform="rotate(17 163.1 209.2)"/><rect x="227.9" y="182.3" width="14.2" height="7.4" fill="#3c3e40" transform="rotate(25 235.0 186.0)"/><rect x="116.2" y="165.3" width="8.2" height="7.2" fill="#36383a" transform="rotate(1 120.3 168.9)"/><rect x="219.9" y="204.3" width="12.0" height="4.1" fill="#343638" transform="rotate(17 225.9 206.3)"/><rect x="168.4" y="165.6" width="8.1" height="6.1" fill="#313335" transform="rotate(-31 172.4 168.6)"/><rect x="143.4" y="166.4" width="14.0" height="5.9" fill="#404244" transform="rotate(20 150.4 169.4)"/><rect x="126.9" y="159.7" width="14.2" height="4.5" fill="#3b3d3f" transform="rotate(-18 134.0 162.0)"/><rect x="222.5" y="198.9" width="13.8" height="4.0" fill="#434547" transform="rotate(9 229.4 200.9)"/><rect x="135.0" y="182.1" width="11.0" height="5.9" fill="#2a2c2e" transform="rotate(19 140.5 185.1)"/><rect x="216.4" y="197.1" width="8.3" height="4.2" fill="#2c2e30" transform="rotate(-1 220.6 199.2)"/><rect x="167.2" y="170.3" width="10.2" height="5.4" fill="#4f5153" transform="rotate(10 172.3 173.0)"/><rect x="137.9" y="167.2" width="14.9" height="5.7" fill="#2a2c2e" transform="rotate(-26 145.4 170.1)"/><rect x="197.1" y="174.3" width="8.6" height="4.7" fill="#505254" transform="rotate(-9 201.4 176.7)"/><rect x="186.2" y="183.8" width="12.5" height="4.2" fill="#2d2f31" transform="rotate(27 192.4 185.9)"/><rect x="148.2" y="180.4" width="12.9" height="5.7" fill="#47494b" transform="rotate(14 154.6 183.3)"/><rect x="133.9" y="186.2" width="13.6" height="4.9" fill="#2b2d2f" transform="rotate(-26 140.7 188.6)"/><rect x="224.2" y="172.7" width="14.3" height="7.2" fill="#47494b" transform="rotate(-17 231.4 176.3)"/><rect x="191.4" y="204.8" width="13.1" height="7.4" fill="#424446" transform="rotate(2 197.9 208.5)"/><rect x="188.8" y="194.6" width="11.9" height="4.4" fill="#2a2c2e" transform="rotate(6 194.8 196.8)"/><rect x="163.0" y="165.4" width="10.7" height="6.1" fill="#424446" transform="rotate(5 168.4 168.5)"/><rect x="211.8" y="189.5" width="13.9" height="7.8" fill="#2f3133" transform="rotate(6 218.8 193.4)"/><rect x="103.1" y="195.3" width="11.6" height="6.9" fill="#303234" transform="rotate(-28 108.9 198.7)"/><rect x="141.2" y="184.7" width="13.8" height="5.0" fill="#393b3d" transform="rotate(-22 148.1 187.1)"/><rect x="158.5" y="192.4" width="14.6" height="5.0" fill="#404244" transform="rotate(7 165.8 194.9)"/><rect x="174.4" y="207.6" width="10.6" height="4.9" fill="#343638" transform="rotate(30 179.7 210.1)"/><rect x="154.4" y="183.6" width="12.1" height="7.7" fill="#333537" transform="rotate(13 160.5 187.4)"/><rect x="186.9" y="204.0" width="9.0" height="4.4" fill="#4b4d4f" transform="rotate(17 191.4 206.2)"/><rect x="226.3" y="186.2" width="14.0" height="4.5" fill="#333537" transform="rotate(18 233.3 188.4)"/><rect x="178.8" y="169.6" width="9.6" height="6.8" fill="#3c3e40" transform="rotate(32 183.6 172.9)"/><rect x="189.2" y="200.6" width="12.2" height="6.3" fill="#37393b" transform="rotate(34 195.3 203.8)"/></g>
<!-- people -->
<!-- P1 -->
<path d="M66 172 L70 140 L74 133 L90 133 L89 150 L84 172z" fill="#3a2c26"/>
<path d="M73 104 Q72 100 80 98 L94 99 Q97 104 96 133 L73 134z" fill="#1b1919"/>
<path d="M78 92 Q84 88 92 92 L93 104 L80 106z" fill="#8a8378"/>
<ellipse cx="89" cy="94" rx="4.5" ry="4.5" fill="#2a2522"/>
<rect x="72" y="170" width="8" height="3" fill="#bdb3a5"/>
<!-- P2 -->
<ellipse cx="115" cy="97" rx="4.8" ry="4.5" fill="#1e1b1b"/>
<path d="M104 104 Q106 100 114 101 L121 102 Q123 110 122 131 L104 131z" fill="#1a1818"/>
<path d="M107 130 L120 130 L119 160 L111 161z" fill="#c8c0af"/>
<!-- P3 -->
<ellipse cx="124.5" cy="99" rx="3.6" ry="4" fill="#6f675d"/>
<path d="M119 104 L130 103 L131 128 L127 152 L121 152 L119 130z" fill="#221f1d"/>
<!-- P4 -->
<ellipse cx="135.5" cy="95.5" rx="4" ry="4.3" fill="#1f1c1b"/>
<path d="M128 100 L142 100 L143 125 L140 148 L132 149 L129 125z" fill="#1d1b1b"/>
<path d="M139 104 L145 104 L146 140 L141 140z" fill="#3a3632"/>
<path d="M140 118 L147 118 L147.5 131 L140 131z" fill="#d7d5d2"/>
<!-- bride -->
<ellipse cx="156.5" cy="100" rx="3.3" ry="3.6" fill="#2a2220"/>
<path d="M150.5 104 L162.5 104 L163 129 L150.5 129z" fill="#c3b8a5"/>
<path d="M153 129 L160 129 L159 141 L154 141z" fill="#9c8c7e"/>
<!-- P6 -->
<ellipse cx="200" cy="99" rx="3.4" ry="3.8" fill="#3a302a"/>
<path d="M195 103 L206 103 L206.5 124 L205 142 L196 142 L195 124z" fill="#3b3a2e"/>
<!-- P7 -->
<ellipse cx="213.5" cy="100" rx="3.4" ry="3.8" fill="#1d1a1a"/>
<path d="M209 104 L219.5 104 L219.5 121 L209 121z" fill="#1a1818"/>
<path d="M207.5 120.5 L221.5 120.5 L220.5 137.5 L208.5 137.5z" fill="#8b2c28"/>
<path d="M211.5 137 L216.5 137 L216 152 L212.5 152z" fill="#a9978a"/>
<!-- P8 -->
<ellipse cx="228" cy="97" rx="3.8" ry="4" fill="#6a625a"/>
<path d="M223 101 L235.5 101 L235.5 123.5 L223 123.5z" fill="#1e1b1b"/>
<path d="M224.3 123 L233.4 123 L233 150 L225 150z" fill="#ada38f"/>
</g>
</svg><div class="r" style="left:702.7px;top:281.2px;width:328.2px;height:222.5px;border:3px solid #2f62c8;border-radius:4px;box-sizing:border-box;"></div><svg class="r" style="left:368.3px;top:718.5px;overflow:hidden;" width="318.5" height="28" viewBox="0 0 320 28" preserveAspectRatio="none"><defs><linearGradient id="p2g" x1="0" y1="0" x2="1" y2="0"><stop offset="0" stop-color="#8e8f97"/><stop offset="0.5" stop-color="#a9aab2"/><stop offset="1" stop-color="#85868e"/></linearGradient>
<linearGradient id="p2s" x1="0" y1="0" x2="1" y2="0"><stop offset="0" stop-color="#c9cacf"/><stop offset="0.6" stop-color="#dcdde0"/><stop offset="1" stop-color="#eeeeef"/></linearGradient></defs>
<rect width="320" height="28" fill="#231a11"/>
<rect x="0" y="0" width="26" height="28" fill="url(#p2g)"/>
<rect x="26" y="0" width="37" height="28" fill="#2b2317"/>
<rect x="63" y="0" width="35" height="28" fill="#3d372c"/>
<path d="M63 6 L98 20" stroke="#5a5446" stroke-width="1"/>
<path d="M98 22.5 L264 16.5 L264 28 L98 28z" fill="url(#p2s)"/>
<rect x="264" y="0" width="56" height="28" fill="#1a130d"/>
<rect x="300" y="0" width="20" height="28" fill="#292117"/>
<ellipse cx="306" cy="29" rx="9" ry="5" fill="#7a4322" opacity="0.55"/>
</svg><svg class="r" style="left:707.8px;top:718.5px;overflow:hidden;" width="318.5" height="28" viewBox="0 0 320 28" preserveAspectRatio="none"><defs><linearGradient id="p2g" x1="0" y1="0" x2="1" y2="0"><stop offset="0" stop-color="#8e8f97"/><stop offset="0.5" stop-color="#a9aab2"/><stop offset="1" stop-color="#85868e"/></linearGradient>
<linearGradient id="p2s" x1="0" y1="0" x2="1" y2="0"><stop offset="0" stop-color="#c9cacf"/><stop offset="0.6" stop-color="#dcdde0"/><stop offset="1" stop-color="#eeeeef"/></linearGradient></defs>
<rect width="320" height="28" fill="#231a11"/>
<rect x="0" y="0" width="26" height="28" fill="url(#p2g)"/>
<rect x="26" y="0" width="37" height="28" fill="#2b2317"/>
<rect x="63" y="0" width="35" height="28" fill="#3d372c"/>
<path d="M63 6 L98 20" stroke="#5a5446" stroke-width="1"/>
<path d="M98 22.5 L264 16.5 L264 28 L98 28z" fill="url(#p2s)"/>
<rect x="264" y="0" width="56" height="28" fill="#1a130d"/>
<rect x="300" y="0" width="20" height="28" fill="#292117"/>
<ellipse cx="306" cy="29" rx="9" ry="5" fill="#7a4322" opacity="0.55"/>
</svg><svg class="r" style="left:1047px;top:718.5px;overflow:hidden;" width="318.5" height="28" viewBox="0 0 320 28" preserveAspectRatio="none"><defs><linearGradient id="p2g" x1="0" y1="0" x2="1" y2="0"><stop offset="0" stop-color="#8e8f97"/><stop offset="0.5" stop-color="#a9aab2"/><stop offset="1" stop-color="#85868e"/></linearGradient>
<linearGradient id="p2s" x1="0" y1="0" x2="1" y2="0"><stop offset="0" stop-color="#c9cacf"/><stop offset="0.6" stop-color="#dcdde0"/><stop offset="1" stop-color="#eeeeef"/></linearGradient></defs>
<rect width="320" height="28" fill="#231a11"/>
<rect x="0" y="0" width="26" height="28" fill="url(#p2g)"/>
<rect x="26" y="0" width="37" height="28" fill="#2b2317"/>
<rect x="63" y="0" width="35" height="28" fill="#3d372c"/>
<path d="M63 6 L98 20" stroke="#5a5446" stroke-width="1"/>
<path d="M98 22.5 L264 16.5 L264 28 L98 28z" fill="url(#p2s)"/>
<rect x="264" y="0" width="56" height="28" fill="#1a130d"/>
<rect x="300" y="0" width="20" height="28" fill="#292117"/>
<ellipse cx="306" cy="29" rx="9" ry="5" fill="#7a4322" opacity="0.55"/>
</svg><div class="r" style="left:358px;top:746px;width:1018px;height:184px;background:#f5f5f5;"></div><div class="t" style="left:379.20px;top:760.90px;font-size:14.05px;line-height:16.86px;color:#222;font-weight:bold;">Auto Choose Keepers</div><svg class="r" style="left:624.8px;top:760px;" width="17.1" height="16.7" viewBox="0 0 17.1 16.7" preserveAspectRatio="none"><polygon points="2.00,8.22 4.75,7.84 7.37,11.27 13.27,2.00 15.10,2.44 7.24,14.70" fill="#111" stroke="#111" stroke-width="0.5" stroke-linejoin="round"/></svg><div class="t" style="left:379.00px;top:785.43px;font-size:11.8px;line-height:14.16px;color:#333;">Choose a rule to determine which photo to</div><div class="t" style="left:379.00px;top:799.23px;font-size:11.8px;line-height:14.16px;color:#333;">keep from each group of duplicates</div><div class="r" style="left:378.5px;top:821px;width:262px;height:20px;background:#fff;border-radius:5px;box-shadow:0 0.5px 1.5px rgba(0,0,0,0.18);"></div><div class="t" style="left:394.40px;top:823.35px;font-size:13.37px;line-height:16.04px;color:#2a2a2a;">Keep PowerPhotos recommendation</div><div class="r" style="left:624px;top:823.3px;width:16px;height:16px;background:#3b82f0;border-radius:4px;"></div><svg class="r" style="left:624px;top:823.3px;" width="16" height="16" viewBox="0 0 16 16" preserveAspectRatio="none"><path d="M5 6.5L8 3.6l3 2.9M5 9.5L8 12.4l3-2.9" stroke="#fff" stroke-width="1.4" fill="none"/></svg><div class="r" style="left:378.8px;top:850.2px;width:14px;height:14px;background:#3b82f0;border-radius:3px;"></div><svg class="r" style="left:378.8px;top:850.2px;" width="14" height="14" viewBox="0 0 14 14" preserveAspectRatio="none"><path d="M3.3 7.3l2.4 2.5 5-5.6" stroke="#fff" stroke-width="1.8" fill="none" stroke-linecap="round" stroke-linejoin="round"/></svg><div class="t" style="left:399.40px;top:850.12px;font-size:13.4px;line-height:16.08px;color:#2a2a2a;">Always choose only a single keeper</div><div class="r" style="left:649.2px;top:760px;width:1.5px;height:152px;background:#e4e4e4;"></div><div class="t" style="left:659.00px;top:761.14px;font-size:14.22px;line-height:17.06px;color:#222;font-weight:bold;">Manually Choose Keepers</div><div class="t" style="left:659.00px;top:785.23px;font-size:11.8px;line-height:14.16px;color:#333;">Override automatic choices by</div><div class="t" style="left:659.00px;top:799.33px;font-size:11.8px;line-height:14.16px;color:#333;">selecting individual photos</div><div class="r" style="left:658.2px;top:821.1px;width:182px;height:20px;background:#fff;border-radius:5px;box-shadow:0 0.5px 1.5px rgba(0,0,0,0.2);"></div><div class="r" style="left:658.2px;top:821.1px;width:92px;height:20px;background:#3b82f0;border-radius:5px 0 0 5px;"></div><svg class="r" style="left:663.1px;top:821px;" width="18.7" height="18.5" viewBox="0 0 18.7 18.5" preserveAspectRatio="none"><polygon points="2.00,9.11 5.09,8.67 8.03,12.58 14.64,2.00 16.70,2.51 7.88,16.50" fill="#0b1440" stroke="#0b1440" stroke-width="0.5" stroke-linejoin="round"/></svg><div class="t" style="left:685.60px;top:823.38px;font-size:13.02px;line-height:15.62px;color:#fff;">Keeper</div><svg class="r" style="left:768.5px;top:822.5px;" width="16" height="19" viewBox="0 0 16 19" preserveAspectRatio="none"><path d="M4.6 3.4Q8 0.6 11.4 3.4" stroke="#1a1a1a" stroke-width="1.3" fill="none"/><path d="M0.4 3.6h15.2" stroke="#1a1a1a" stroke-width="1.7" stroke-linecap="round"/><path d="M1.8 5h12.4l-0.5 12.3q-0.1 1.2-1.2 1.2h-9q-1.1 0-1.2-1.2z" fill="#1a1a1a"/><path d="M5.1 6.2v9.2M7.95 6.2v9.2M10.9 6.2v9.2" stroke="#e2e2e2" stroke-width="1.3"/></svg><div class="t" style="left:790.60px;top:823.72px;font-size:12.66px;line-height:15.19px;color:#222;">Trash</div><div class="t" style="left:449.20px;width:600px;text-align:center;top:849.73px;font-size:12.86px;line-height:15.43px;color:#2a2a2a;">OA9T5007.CR2</div><div class="r" style="left:847.6px;top:760px;width:1.5px;height:152px;background:#e4e4e4;"></div><div class="t" style="left:858.20px;top:761.47px;font-size:13.98px;line-height:16.78px;color:#222;font-weight:bold;">Options</div><svg class="r" style="left:857px;top:786px;" width="15" height="15" viewBox="0 0 15 15" preserveAspectRatio="none"><circle cx="7.5" cy="7.5" r="6.8" fill="#fff" stroke="#d2d2d2" stroke-width="0.8"/></svg><div class="t" style="left:878.00px;top:786.38px;font-size:13.65px;line-height:16.38px;color:#2a2a2a;">Add duplicates to album</div><svg class="r" style="left:857px;top:810px;" width="15" height="15" viewBox="0 0 15 15" preserveAspectRatio="none"><circle cx="7.5" cy="7.5" r="7" fill="#3b82f0"/><circle cx="7.5" cy="7.5" r="2.6" fill="#fff"/></svg><div class="t" style="left:878.00px;top:810.15px;font-size:13.58px;line-height:16.30px;color:#2a2a2a;">Delete duplicates</div><div class="r" style="left:877.5px;top:834.3px;width:14px;height:14px;background:#3b82f0;border-radius:3px;"></div><svg class="r" style="left:877.5px;top:834.3px;" width="14" height="14" viewBox="0 0 14 14" preserveAspectRatio="none"><path d="M3.3 7.3l2.4 2.5 5-5.6" stroke="#fff" stroke-width="1.8" fill="none" stroke-linecap="round" stroke-linejoin="round"/></svg><div class="t" style="left:897.80px;top:834.41px;font-size:13.51px;line-height:16.21px;color:#2a2a2a;">Keep albums intact</div><div class="t" style="left:858.20px;top:857.45px;font-size:11.89px;line-height:14.27px;color:#333;">Duplicate photos will be deleted from</div><div class="t" style="left:858.20px;top:871.45px;font-size:11.89px;line-height:14.27px;color:#333;">the library. Any photos deleted from</div><div class="t" style="left:858.20px;top:885.45px;font-size:11.89px;line-height:14.27px;color:#333;">albums will be replaced with the</div><div class="t" style="left:858.20px;top:899.45px;font-size:11.89px;line-height:14.27px;color:#333;">corresponding keeper photo.</div><div class="r" style="left:1064px;top:760px;width:1.5px;height:152px;background:#e4e4e4;"></div><div class="t" style="left:1074.00px;top:760.92px;font-size:14.56px;line-height:17.47px;color:#222;font-weight:bold;">Stats</div><div class="t" style="left:1074.00px;top:785.93px;font-size:13.6px;line-height:16.32px;color:#2a2a2a;">76 duplicates in 35 groups</div><div class="t" style="left:1074.00px;top:809.83px;font-size:13.6px;line-height:16.32px;color:#2a2a2a;">35 keepers</div><div class="t" style="left:1074.00px;top:833.73px;font-size:13.6px;line-height:16.32px;color:#2a2a2a;">41 to trash</div><div class="t" style="left:1074.00px;top:857.63px;font-size:13.6px;line-height:16.32px;color:#2a2a2a;">298.9 MB saved</div>
</div></div>
</body></html>
